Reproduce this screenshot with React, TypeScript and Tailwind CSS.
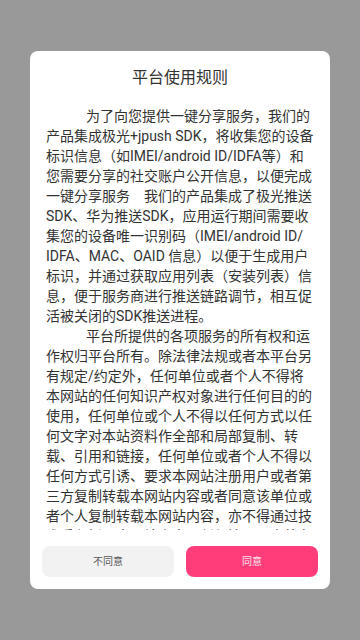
const paragraphs: string[][] = [
  [
    "为了向您提供一键分享服务，我们的",
    "产品集成极光+jpush SDK，将收集您的设备",
    "标识信息（如IMEI/android ID/IDFA等）和",
    "您需要分享的社交账户公开信息，以便完成",
    "一键分享服务　我们的产品集成了极光推送",
    "SDK、华为推送SDK，应用运行期间需要收",
    "集您的设备唯一识别码（IMEI/android ID/",
    "IDFA、MAC、OAID 信息）以便于生成用户",
    "标识，并通过获取应用列表（安装列表）信",
    "息，便于服务商进行推送链路调节，相互促",
    "活被关闭的SDK推送进程。",
  ],
  [
    "平台所提供的各项服务的所有权和运",
    "作权归平台所有。除法律法规或者本平台另",
    "有规定/约定外，任何单位或者个人不得将",
    "本网站的任何知识产权对象进行任何目的的",
    "使用，任何单位或个人不得以任何方式以任",
    "何文字对本站资料作全部和局部复制、转",
    "载、引用和链接，任何单位或者个人不得以",
    "任何方式引诱、要求本网站注册用户或者第",
    "三方复制转载本网站内容或者同意该单位或",
    "者个人复制转载本网站内容，亦不得通过技",
    "术手段抓取本网站内容，任何注册用户将在",
  ],
];

const App = () => {
  return (
    <div className="flex min-h-[640px] w-full items-center justify-center bg-[#999999] font-['Roboto','Noto_Sans_CJK_SC',sans-serif]">
      <div className="flex h-[538px] w-[300px] flex-col rounded-lg bg-white">
        <h1 className="pt-[15px] text-center text-base leading-6 text-[#333333]">平台使用规则</h1>

        <div className="mt-4 h-[424px] overflow-hidden px-4 text-sm leading-5 text-[#333333]">
          {paragraphs.map((lines, p) => (
            <div key={p}>
              {lines.map((line, i) => (
                <div key={i} className={i === 0 ? "whitespace-pre pl-[40px]" : "whitespace-pre"}>
                  {line}
                </div>
              ))}
            </div>
          ))}
        </div>

        <div className="grid grid-cols-2 gap-3 px-3 pb-3 pt-4">
          <button className="h-[31px] rounded-lg bg-[#f2f2f2] text-[10px] text-[#555555]">不同意</button>
          <button className="h-[31px] rounded-lg bg-[#ff3d7b] text-[10px] text-[#ffe6ee]">同意</button>
        </div>
      </div>
    </div>
  );
};

export default App;
